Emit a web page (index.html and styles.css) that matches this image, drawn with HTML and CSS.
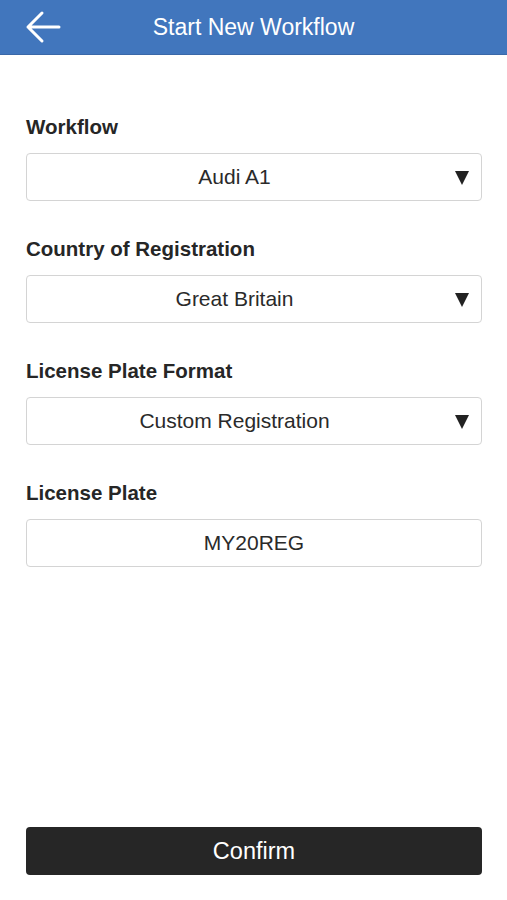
FILE: index.html
```html
<!DOCTYPE html>
<html lang="en">
<head>
    <meta charset="UTF-8">
    <meta name="viewport" content="width=device-width, initial-scale=1.0">
    <title>Start New Workflow</title>
    <link rel="stylesheet" href="styles.css">
</head>
<body>

    <!-- Header -->
    <div class="navbar">
        <span class="back">
            <svg width="36" height="34" viewBox="0 0 36 34">
                <path d="M34 17 H3 M17 3 L3 17 L17 31" fill="none" stroke="#fff" stroke-width="3" stroke-linecap="round" stroke-linejoin="round"/>
            </svg>
        </span>
        <span class="title">Start New Workflow</span>
    </div>

    <!-- Form -->
    <div class="content">
        <div class="field">
            <label>Workflow</label>
            <div class="select">Audi A1<span class="caret"></span></div>
        </div>

        <div class="field">
            <label>Country of Registration</label>
            <div class="select">Great Britain<span class="caret"></span></div>
        </div>

        <div class="field">
            <label>License Plate Format</label>
            <div class="select">Custom Registration<span class="caret"></span></div>
        </div>

        <div class="field">
            <label>License Plate</label>
            <div class="input">MY20REG</div>
        </div>

        <button class="confirm">Confirm</button>
    </div>

</body>
</html>
```

FILE: styles.css
```css
/* Reset */
* {
    margin: 0;
    padding: 0;
    box-sizing: border-box;
}

body {
    font-family: 'Liberation Sans', Arial, sans-serif;
    color: #222;
    background-color: #fff;
    display: flex;
    flex-direction: column;
    height: 900px;
}

/* Header */
.navbar {
    position: relative;
    height: 55px;
    background-color: #4176bd;
    display: flex;
    align-items: center;
    justify-content: center;
    border-bottom: 1px solid #3a68a8;
}

.navbar .back {
    position: absolute;
    left: 25px;
    top: 10px;
    display: flex;
}

.navbar .title {
    color: #fff;
    font-size: 23px;
}

/* Form */
.content {
    flex: 1;
    display: flex;
    flex-direction: column;
    padding: 60px 25px 25px 26px;
}

.field {
    margin-bottom: 36px;
}

.field label {
    display: block;
    font-size: 20.5px;
    font-weight: bold;
    line-height: 24px;
    margin-bottom: 14px;
    color: #262626;
}

.select,
.input {
    position: relative;
    height: 48px;
    border: 1px solid #d4d4d4;
    border-radius: 4px;
    display: flex;
    align-items: center;
    justify-content: center;
    font-size: 21px;
    color: #2a2a2a;
}

.select {
    padding-right: 39px;
}

.caret {
    position: absolute;
    right: 12px;
    top: 17px;
    width: 0;
    height: 0;
    border-left: 7px solid transparent;
    border-right: 7px solid transparent;
    border-top: 14px solid #222;
}

/* Button */
.confirm {
    margin-top: auto;
    height: 48px;
    border: none;
    border-radius: 4px;
    background-color: #262626;
    color: #fff;
    font-family: inherit;
    font-size: 23.5px;
}
```
